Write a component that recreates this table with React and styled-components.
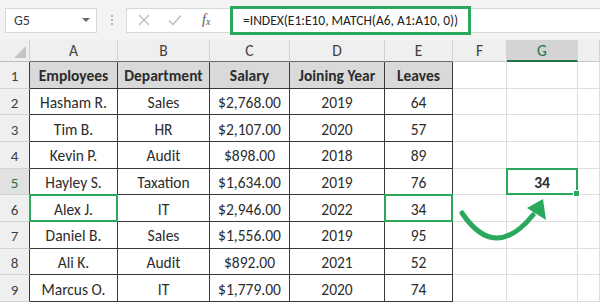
import React from "react";
import styled, { createGlobalStyle, css } from "styled-components";

const GREEN = "#2aa95c";
const XL_GREEN = "#217346";
const DARK = "#3a3a3a";
const GRID = "#dedede";
const FONT = `"Carlito", "Lato", "Liberation Sans", sans-serif`;

const Global = createGlobalStyle`
  html, body { margin: 0; padding: 0; background: #fff; overflow: hidden; }
  body { font-family: ${FONT}; }
`;

const Page = styled.div`
  position: relative;
  width: 600px;
  height: 302px;
  overflow: hidden;
  background: #fff;
`;

const Toolbar = styled.div`
  height: 40px;
  background: #f3f3f3;
  display: flex;
  align-items: center;
  padding-left: 5px;
  box-sizing: border-box;
`;

const NameBox = styled.div`
  width: 92px;
  height: 25px;
  box-sizing: border-box;
  background: #fff;
  border: 1px solid #d8d8d8;
  display: flex;
  align-items: center;
  justify-content: space-between;
  padding: 0 6px 0 8px;
  font-size: 14px;
  color: #3a3a3a;
`;

const Caret = styled.span`
  width: 0;
  height: 0;
  border-left: 4px solid transparent;
  border-right: 4px solid transparent;
  border-top: 4px solid #6a6a6a;
`;

const Dots = styled.div`
  width: 3px;
  margin: 0 12px 0 14px;
  display: flex;
  flex-direction: column;
  gap: 2px;
  span {
    width: 2px;
    height: 2px;
    background: #b8b8b8;
  }
`;

const FuncBox = styled.div`
  width: 104px;
  height: 25px;
  box-sizing: border-box;
  background: #fff;
  border: 1px solid #d8d8d8;
  border-right: none;
  display: flex;
  align-items: center;
  padding-left: 11px;
  gap: 18px;
`;

const Fx = styled.span`
  font-family: "Liberation Serif", serif;
  font-style: italic;
  font-size: 14px;
  color: #555;
  margin-left: 2px;
  sub {
    font-size: 10px;
    vertical-align: -1px;
  }
`;

const FormulaBar = styled.div`
  flex: 1;
  height: 25px;
  box-sizing: border-box;
  background: #fff;
  border-top: 1px solid #d8d8d8;
  border-bottom: 1px solid #d8d8d8;
  display: flex;
  align-items: center;
`;

const FormulaHighlight = styled.div`
  width: 241px;
  height: 29px;
  box-sizing: border-box;
  border: 3px solid ${GREEN};
  display: flex;
  align-items: center;
  padding-left: 10px;
  font-size: 13.5px;
  color: #222;
  white-space: nowrap;
  background: #fff;
`;

const Sheet = styled.div`
  display: grid;
  grid-template-columns: 30px 88px 92px 80px 95px 68px 54px 71px 1fr;
  grid-template-rows: 22px repeat(9, 1fr);
  height: 262px;
`;

const Corner = styled.div`
  background: #efefef;
  border-right: 1px solid #cfcfcf;
  border-bottom: 1px solid #bdbdbd;
  box-sizing: border-box;
  display: flex;
  align-items: flex-end;
  justify-content: flex-end;
  padding: 0 3px 3px 0;
`;

const CornerTri = styled.span`
  width: 0;
  height: 0;
  border-left: 12px solid transparent;
  border-bottom: 12px solid #c4c4c4;
`;

const ColHead = styled.div`
  background: #efefef;
  box-sizing: border-box;
  border-right: 1px solid #d3d3d3;
  border-bottom: 1px solid ${(p) => (p.$dark ? "#6b6b6b" : "#c8c8c8")};
  display: flex;
  align-items: center;
  justify-content: center;
  font-size: 15.5px;
  color: #3f3f3f;
  ${(p) =>
    p.$active &&
    css`
      background: #d4d4d4;
      color: ${XL_GREEN};
      border-bottom: 2px solid ${XL_GREEN};
    `}
`;

const RowHead = styled.div`
  background: #efefef;
  box-sizing: border-box;
  border-right: 1px solid ${DARK};
  border-bottom: 1px solid #d3d3d3;
  display: flex;
  align-items: center;
  justify-content: center;
  padding-top: 3px;
  font-size: 15px;
  color: #3f3f3f;
  ${(p) =>
    p.$active &&
    css`
      background: #e1e1e1;
      color: ${XL_GREEN};
    `}
`;

const Cell = styled.div`
  position: relative;
  box-sizing: border-box;
  border-right: 1px solid ${(p) => (p.$table ? DARK : GRID)};
  border-bottom: 1px solid ${(p) => (p.$table ? DARK : GRID)};
  display: flex;
  align-items: center;
  justify-content: center;
  padding-top: 2px;
  font-size: 15.5px;
  color: #2c2c2c;
  white-space: nowrap;
  background: ${(p) => (p.$head ? "#d9d9d9" : "#fff")};
  font-weight: ${(p) => (p.$bold ? 700 : 400)};
  ${(p) =>
    p.$selected &&
    css`
      &::after {
        content: "";
        position: absolute;
        left: -1px;
        top: -1px;
        right: -1px;
        bottom: -1px;
        border: 2px solid ${GREEN};
        pointer-events: none;
      }
    `}
  ${(p) =>
    p.$handle &&
    css`
      &::before {
        content: "";
        position: absolute;
        right: -3px;
        bottom: -3px;
        width: 5px;
        height: 5px;
        background: ${GREEN};
        border: 1px solid #fff;
        z-index: 2;
      }
    `}
`;

const Overlay = styled.svg`
  position: absolute;
  left: 0;
  top: 0;
  pointer-events: none;
`;

const cols = ["A", "B", "C", "D", "E", "F", "G", ""];
const data = [
  ["Employees", "Department", "Salary", "Joining Year", "Leaves"],
  ["Hasham R.", "Sales", "$2,768.00", "2019", "64"],
  ["Tim B.", "HR", "$2,107.00", "2020", "57"],
  ["Kevin P.", "Audit", "$898.00", "2018", "89"],
  ["Hayley S.", "Taxation", "$1,634.00", "2019", "76"],
  ["Alex J.", "IT", "$2,946.00", "2022", "34"],
  ["Daniel B.", "Sales", "$1,556.00", "2019", "95"],
  ["Ali K.", "Audit", "$892.00", "2021", "52"],
  ["Marcus O.", "IT", "$1,779.00", "2020", "74"],
];

export default function App() {
  return (
    <Page>
      <Global />
      <Toolbar>
        <NameBox>
          <span>G5</span>
          <Caret />
        </NameBox>
        <Dots>
          <span />
          <span />
          <span />
        </Dots>
        <FuncBox>
          <svg width="12" height="12" viewBox="0 0 12 12">
            <path d="M1 1 L11 11 M11 1 L1 11" stroke="#bdbdbd" strokeWidth="1.4" fill="none" />
          </svg>
          <svg width="14" height="12" viewBox="0 0 14 12">
            <path d="M1 6.5 L5 10.5 L13 1.5" stroke="#bdbdbd" strokeWidth="1.5" fill="none" />
          </svg>
          <Fx>
            f<sub>x</sub>
          </Fx>
        </FuncBox>
        <FormulaBar>
          <FormulaHighlight>=INDEX(E1:E10, MATCH(A6, A1:A10, 0))</FormulaHighlight>
        </FormulaBar>
      </Toolbar>
      <Sheet>
        <Corner>
          <CornerTri />
        </Corner>
        {cols.map((c, i) => (
          <ColHead key={i} $dark={i < 5} $active={c === "G"}>
            {c}
          </ColHead>
        ))}
        {data.map((row, r) => (
          <React.Fragment key={r}>
            <RowHead $active={r === 4}>{r + 1}</RowHead>
            {row.map((v, c) => (
              <Cell
                key={c}
                $table
                $head={r === 0}
                $bold={r === 0}
                $selected={r === 5 && (c === 0 || c === 4)}
              >
                {v}
              </Cell>
            ))}
            <Cell />
            <Cell $bold={r === 4} $selected={r === 4} $handle={r === 4}>
              {r === 4 ? "34" : ""}
            </Cell>
            <Cell />
          </React.Fragment>
        ))}
      </Sheet>
      <Overlay width="600" height="302" viewBox="0 0 600 302">
        <path
          d="M462 213 Q495 262 533 215"
          stroke={GREEN}
          strokeWidth="5"
          fill="none"
          strokeLinecap="round"
        />
        <polygon points="543,199 527,208 546,220" fill={GREEN} />
      </Overlay>
    </Page>
  );
}
